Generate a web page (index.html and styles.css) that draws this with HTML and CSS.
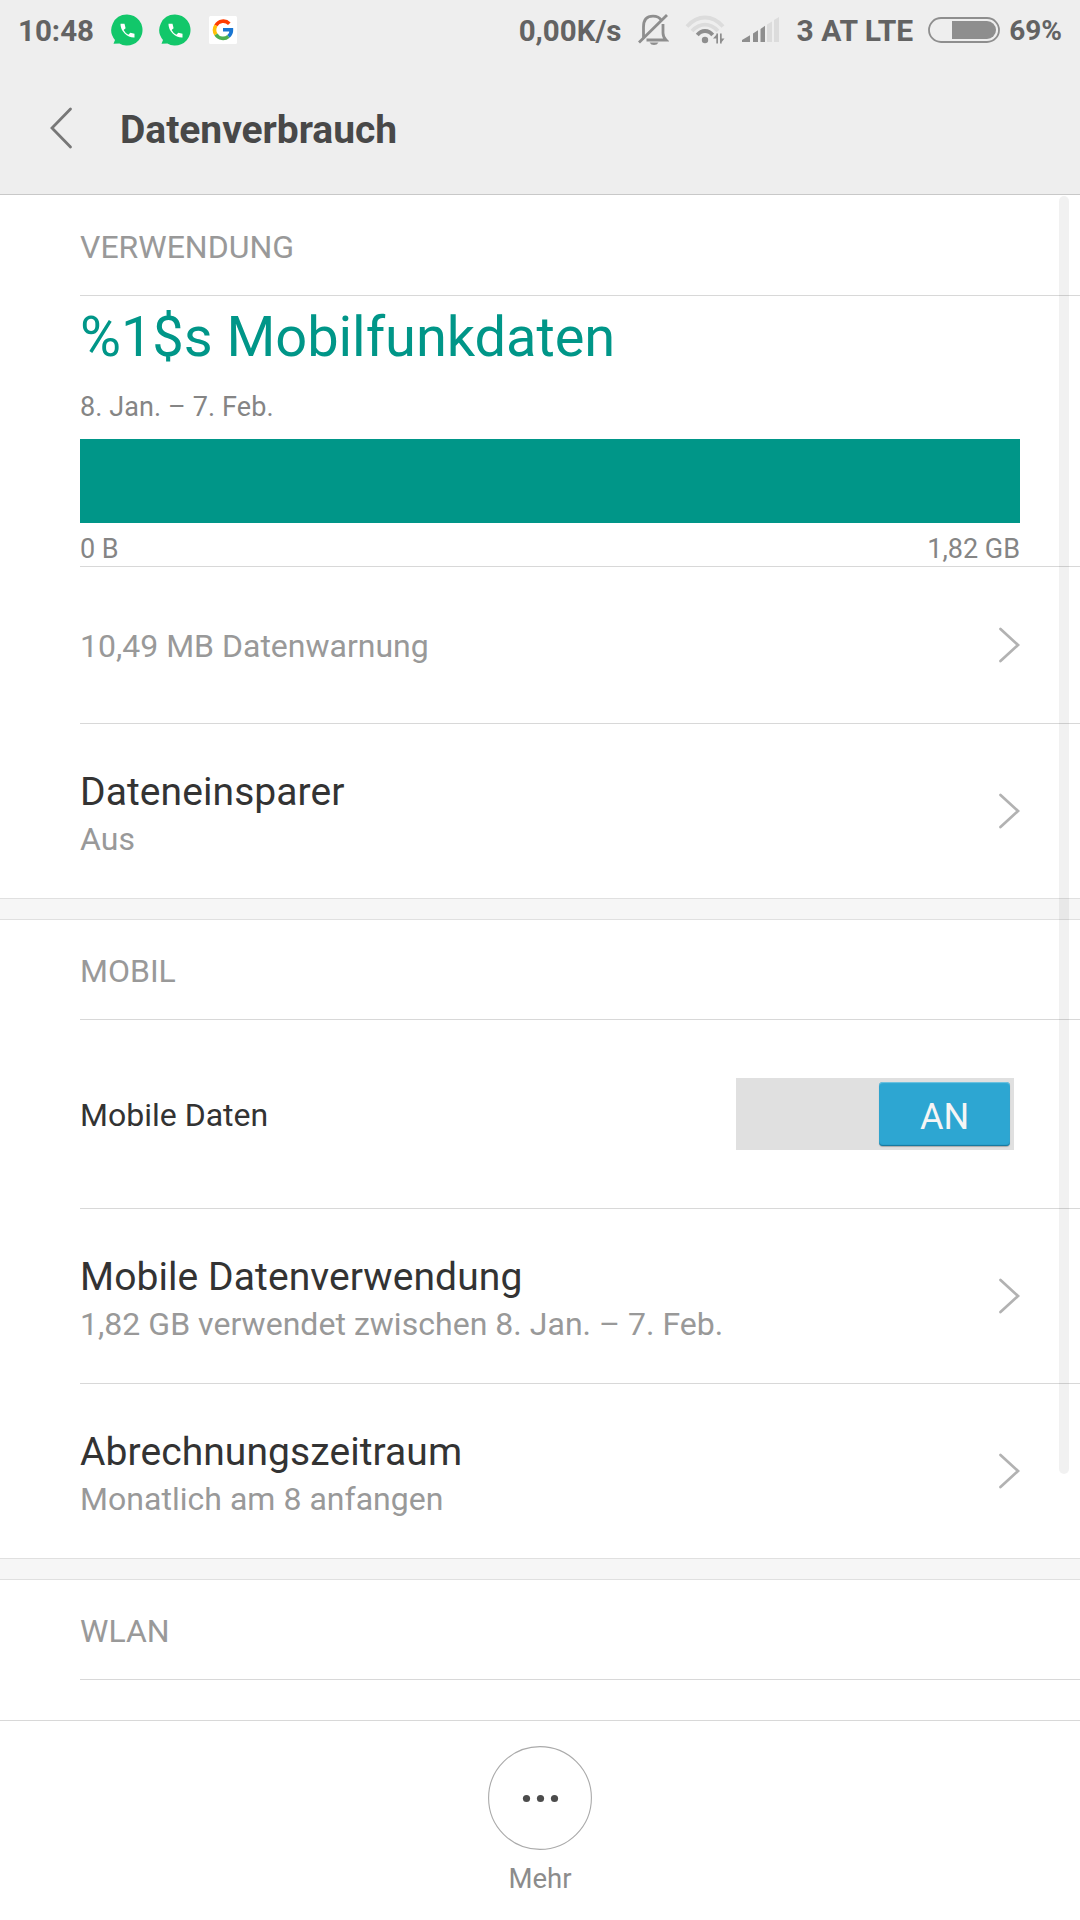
FILE: index.html
```html
<!DOCTYPE html>
<html lang="de">
<head>
<meta charset="utf-8">
<title>Datenverbrauch</title>
<link rel="stylesheet" href="styles.css">
</head>
<body>
<header class="header">
  <div class="status">
    <span class="clock">10:48</span>
    <svg class="chat" width="32" height="32" viewBox="0 0 32 32"><path d="M16 .5a15.5 15.5 0 1 1-7.600 29.000L2.500 29.800 4 26A15.500 15.500 0 0 1 16 .5z" fill="#12c76a"/><path d="M9.500 9.800h4l1.100 4.500-2 1.700q1.600 3.200 4.800 4.800l1.900-2 4.200 1v3.700q-5.500.3-9.800-4-4.400-4.400-4.200-9.700z" fill="#fff"/></svg>
    <svg class="chat chat-second" width="32" height="32" viewBox="0 0 32 32"><path d="M16 .5a15.500 15.500 0 1 1-7.600 29.000L2.500 29.800 4 26A15.500 15.500 0 0 1 16 .5z" fill="#12c76a"/><path d="M9.500 9.800h4l1.100 4.500-2 1.700q1.600 3.200 4.800 4.800l1.900-2 4.200 1v3.700q-5.500.3-9.800-4-4.400-4.400-4.200-9.700z" fill="#fff"/></svg>
    <svg class="google" width="28" height="28" viewBox="0 0 28 28"><rect width="28" height="28" rx="1.500" fill="#fff"/><g fill="none" stroke-width="3.600"><path d="M20.300 7.700A8.400 8.400 0 0 0 6.900 9.500" stroke="#ff3d00"/><path d="M6.900 9.500a8.400 8.400 0 0 0 0 9" stroke="#ffc107"/><path d="M6.900 18.500a8.400 8.400 0 0 0 12.600 1.800" stroke="#4caf50"/><path d="M14 13.700h8.400a8.400 8.400 0 0 1-2.900 6.600" stroke="#1976d2"/></g></svg>
    <span class="speed">0,00K/s</span>
    <svg class="bell" width="32" height="32" viewBox="0 0 32 32"><path d="M6.500 23.500V13C6.500 6 10 2.200 16 2.200c3.800 0 6.700 1.400 8.300 4M26 10v9q0 4 3 7H9.500M2 28.500 30 1" fill="none" stroke="#8e8e8e" stroke-width="2.800"/><path d="M12.500 28.500h9q-1.500 2.500-4.500 2.500t-4.500-2.500z" fill="#8e8e8e"/></svg>
    <svg class="wifi" width="40" height="30" viewBox="0 0 40 30"><g fill="none" stroke-width="3.800"><path d="M2 11.500q8-9 18-9t18 9M7 16q6-6.300 13-6.300T33 16" stroke="#dcdcdc"/><path d="M12.300 20q3.200-4 7.700-4t7.700 4" stroke="#8e8e8e"/></g><circle cx="20" cy="25" r="3.200" fill="#8e8e8e"/><path d="M31.300 18.500h1.700v10h-1.700zm-3.300 5 4-4.500v4.500zM35 18.500h1.700v10H35zm1 5h3.500L36 28z" fill="#8e8e8e"/></svg>
    <svg class="signal" width="38" height="26" viewBox="0 0 38 26"><path d="M1 23l8-4.700V25H1zM12 16.500l5-3.200V25h-5zM19.500 12l4.500-3.200V25h-4.500z" fill="#8e8e8e"/><path d="M26 7.500l5-3V25h-5zM33 3l5-3v25h-5z" fill="#dcdcdc"/></svg>
    <span class="carrier">3 AT LTE</span>
    <svg class="battery" width="72" height="26" viewBox="0 0 72 26"><rect x="1" y="1" width="70" height="24" rx="12" fill="none" stroke="#8e8e8e" stroke-width="1.800"/><path d="M24 4h35a9 9 0 0 1 0 18H24z" fill="#8e8e8e"/></svg>
    <span class="percent">69%</span>
  </div>
  <div class="toolbar">
    <svg class="back" width="24" height="42" viewBox="0 0 24 42"><path d="M21.500 2 3 21l18.500 19" fill="none" stroke="#777" stroke-width="2.800" stroke-linecap="round"/></svg>
    <h1 class="title">Datenverbrauch</h1>
  </div>
</header>
<main class="content">
  <section class="group">
    <h2 class="category category-first">VERWENDUNG</h2>
    <div class="usage">
      <div class="usage-title">%1$s Mobilfunkdaten</div>
      <div class="usage-period">8. Jan. – 7. Feb.</div>
      <div class="usage-bar"></div>
      <div class="usage-scale"><span>0 B</span><span>1,82 GB</span></div>
    </div>
    <div class="row row-warning">
      <div class="summary">10,49 MB Datenwarnung</div>
      <svg class="chevron" width="22" height="38" viewBox="0 0 22 38"><path d="M2.500 3 20 19 2.500 35" fill="none" stroke="#b2b2b2" stroke-width="2.700" stroke-linecap="round"/></svg>
    </div>
    <div class="row">
      <div><div class="name">Dateneinsparer</div><div class="summary">Aus</div></div>
      <svg class="chevron" width="22" height="38" viewBox="0 0 22 38"><path d="M2.500 3 20 19 2.500 35" fill="none" stroke="#b2b2b2" stroke-width="2.700" stroke-linecap="round"/></svg>
    </div>
  </section>
  <div class="gap"></div>
  <section class="group">
    <h2 class="category">MOBIL</h2>
    <div class="row row-switch">
      <div class="switch-name">Mobile Daten</div>
      <div class="switch"><div class="thumb">AN</div></div>
    </div>
    <div class="row">
      <div><div class="name">Mobile Datenverwendung</div><div class="summary">1,82 GB verwendet zwischen 8. Jan. – 7. Feb.</div></div>
      <svg class="chevron" width="22" height="38" viewBox="0 0 22 38"><path d="M2.500 3 20 19 2.500 35" fill="none" stroke="#b2b2b2" stroke-width="2.700" stroke-linecap="round"/></svg>
    </div>
    <div class="row">
      <div><div class="name">Abrechnungszeitraum</div><div class="summary">Monatlich am 8 anfangen</div></div>
      <svg class="chevron" width="22" height="38" viewBox="0 0 22 38"><path d="M2.500 3 20 19 2.500 35" fill="none" stroke="#b2b2b2" stroke-width="2.700" stroke-linecap="round"/></svg>
    </div>
  </section>
  <div class="gap"></div>
  <section class="group">
    <h2 class="category">WLAN</h2>
  </section>
  <div class="scrollbar"></div>
</main>
<footer class="footer">
  <svg class="more" width="104" height="104" viewBox="0 0 104 104"><circle cx="52" cy="52" r="51.400" fill="none" stroke="#aaa" stroke-width="1.100"/><g fill="#4c4c4c"><circle cx="38.500" cy="52.500" r="3.600"/><circle cx="52.500" cy="52.500" r="3.600"/><circle cx="66.500" cy="52.500" r="3.600"/></g></svg>
  <div class="more-label">Mehr</div>
</footer>
</body>
</html>
```
FILE: styles.css
```css
* { box-sizing: border-box; }
body {
  margin: 0;
  width: 1080px;
  height: 1920px;
  display: flex;
  flex-direction: column;
  overflow: hidden;
  background: #fff;
  font-family: Roboto, sans-serif;
  color: #333;
}
svg { display: block; flex: none; }
h1, h2 { margin: 0; }

.header {
  height: 195px;
  flex: none;
  background: #eee;
  border-bottom: 1px solid #c8c8c8;
}
.status {
  height: 60px;
  display: flex;
  align-items: center;
  padding: 0 18px 0 18px;
  font-size: 29.5px;
  font-weight: 700;
  color: #636363;
  white-space: nowrap;
}
.clock { width: 93px; padding-top: 2px; }
.chat-second { margin-left: 16px; }
.google { margin-left: 18px; }
.speed { margin-left: auto; padding-top: 2px; }
.bell { margin-left: 15px; }
.wifi { margin-left: 16px; }
.signal { margin-left: 16px; }
.carrier { margin-left: 18px; font-size: 30px; }
.battery { margin-left: 15px; }
.percent { margin-left: 9px; font-size: 28px; }

.toolbar {
  height: 134px;
  display: flex;
  align-items: center;
  padding: 5px 0 0 49px;
}
.back { margin-top: -4px; }
.title {
  margin-left: 47px;
  font-size: 39px;
  line-height: 46px;
  letter-spacing: -.04px;
  color: #484848;
}

.content {
  position: relative;
  flex: 1;
  min-height: 0;
}
.group { padding-left: 80px; }
.category {
  height: 100px;
  padding-top: 1px;
  border-bottom: 1px solid #d8d8d8;
  font-size: 32px;
  line-height: 100px;
  font-weight: 400;
  color: #999;
}
.category-first {
  height: 101px;
  padding-top: 2px;
}
.usage {
  height: 271px;
  padding: 8px 60px 0 0;
  border-bottom: 1px solid #d8d8d8;
  font-size: 27px;
  line-height: 32px;
  color: #858585;
}
.usage-title {
  font-size: 56px;
  line-height: 66px;
  letter-spacing: -.06px;
  color: #009688;
}
.usage-period { margin-top: 21px; letter-spacing: .1px; }
.usage-bar {
  height: 84px;
  margin: 16px 0 10px;
  background: #009688;
}
.usage-scale {
  display: flex;
  justify-content: space-between;
}
.row {
  height: 175px;
  display: flex;
  align-items: center;
  justify-content: space-between;
  padding-right: 60px;
  border-bottom: 1px solid #d8d8d8;
}
.row:last-child { border-bottom: 0; height: 174px; }
.row-warning { height: 157px; }
.row-switch { height: 189px; padding-right: 66px; }
.name {
  font-size: 39px;
  line-height: 46px;
  letter-spacing: .08px;
  padding-top: 4px;
}
.summary {
  font-size: 32px;
  line-height: 38px;
  letter-spacing: .03px;
  margin-top: 5px;
  color: #999;
}
.row-warning .summary { margin-top: 2px; letter-spacing: 0; }
.switch-name { font-size: 32px; padding-top: 2px; }
.switch {
  width: 278px;
  height: 72px;
  padding: 4px;
  display: flex;
  justify-content: flex-end;
  background: #e0e0e0;
}
.thumb {
  width: 131px;
  height: 64px;
  border-radius: 4px;
  background: #2da6d2;
  box-shadow: inset 0 1px 1px #72c5e2, inset 0 -1px 1px #17769b, 0 1px 1px #aaa;
  color: #f5f5f5;
  font-size: 36px;
  line-height: 70px;
  text-align: center;
}
.gap {
  height: 22px;
  background: #f6f6f6;
  border-top: 1px solid #e0e0e0;
  border-bottom: 1px solid #e0e0e0;
}
.scrollbar {
  position: absolute;
  top: 1px;
  left: 1059px;
  width: 10px;
  height: 1278px;
  border-radius: 5px;
  background: rgba(0, 0, 0, .055);
}
.footer {
  height: 200px;
  flex: none;
  display: flex;
  flex-direction: column;
  align-items: center;
  padding-top: 25px;
  border-top: 1px solid #d8d8d8;
}
.more-label {
  margin-top: 12px;
  font-size: 27.5px;
  line-height: 34px;
  color: #8c8c8c;
}
```
